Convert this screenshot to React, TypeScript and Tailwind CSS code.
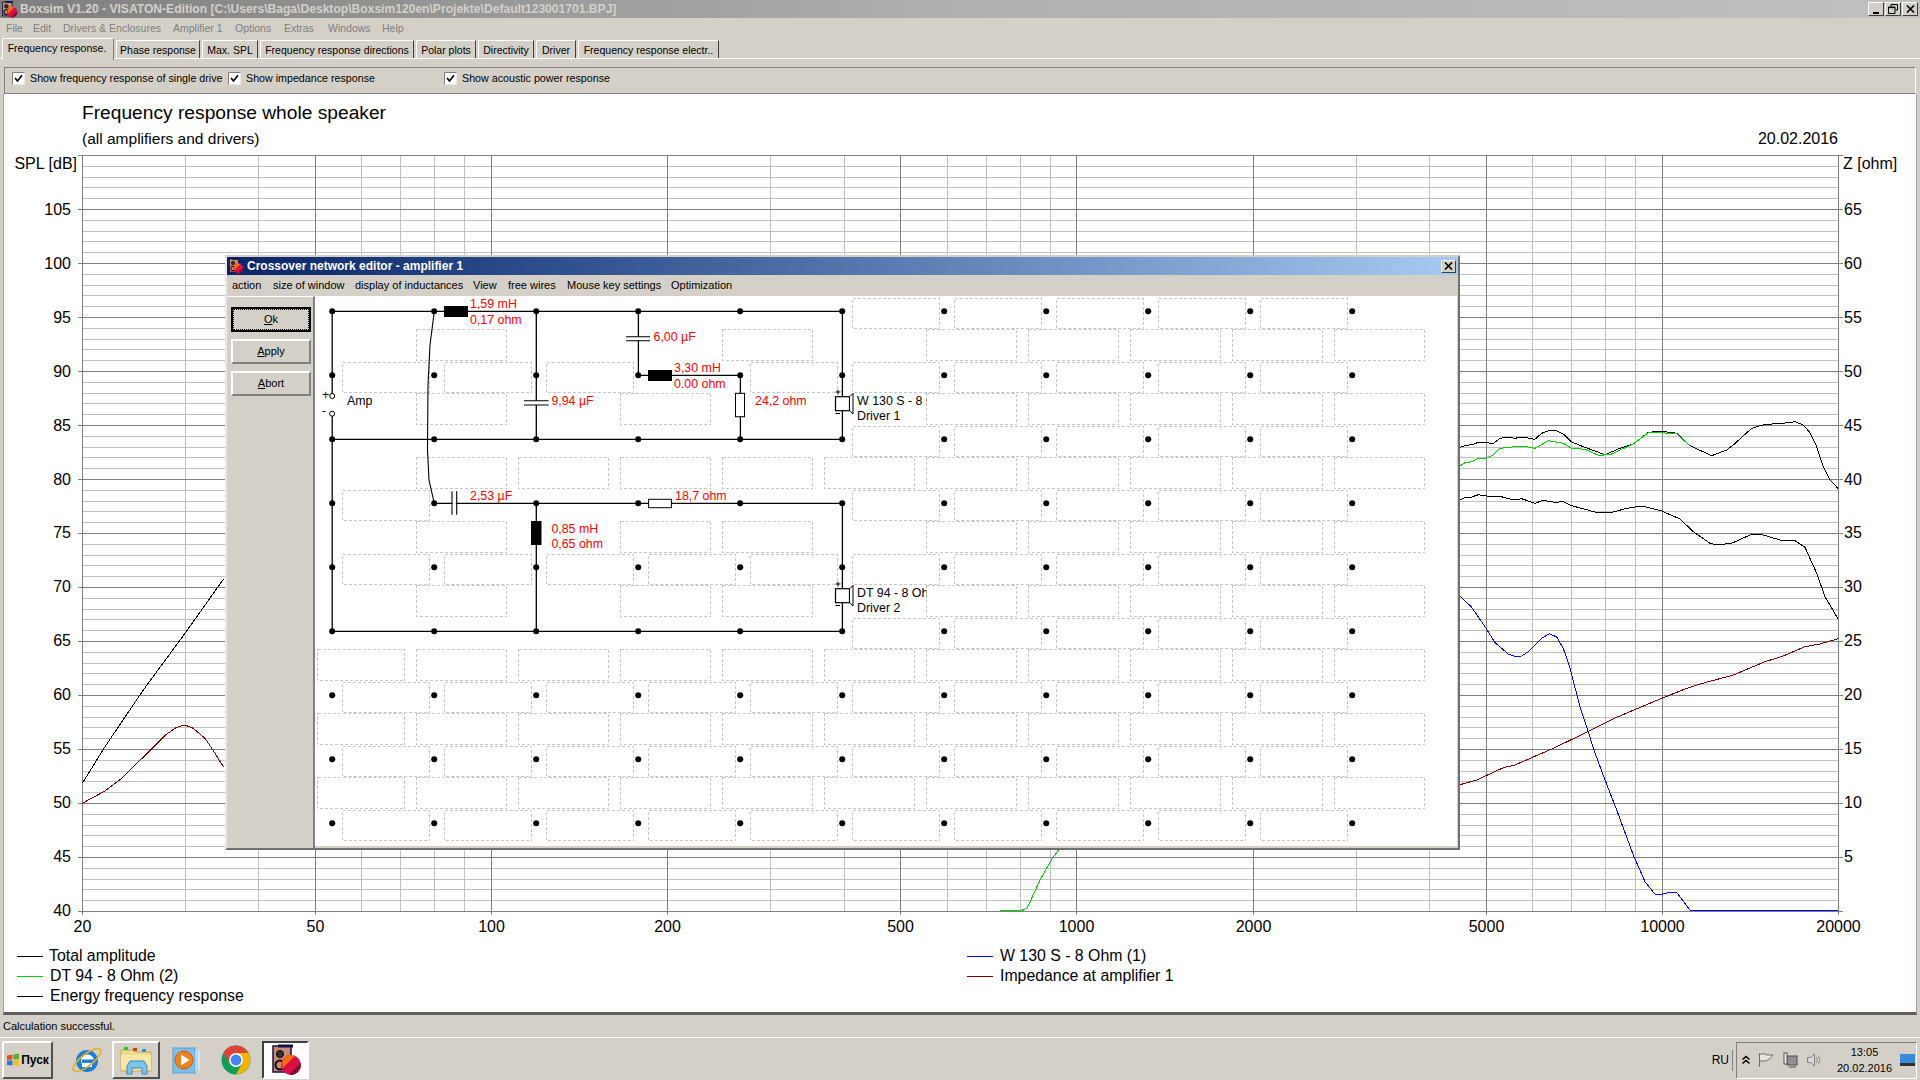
import React from "react";

type P = [number, number];
const conv = (pts: P[], ox: number, oy: number) => pts.map(([x, y]) => `${(x / 3 + ox).toFixed(1)},${(y / 3 + oy).toFixed(1)}`).join(" ");

const totalPts: P[] = [[60,622],[80,616],[100,613],[115,607],[160,610],[180,595],[205,592],[225,595],[245,591],[285,598],[305,580],[330,571],[350,573],[370,582],[395,606],[430,620],[495,644],[540,625],[580,612],[625,577],[665,574],[710,580],[750,617],[815,647],[860,630],[880,615],[935,565],[975,553],[1020,551],[1065,545],[1090,555],[1110,578],[1130,620],[1150,680],[1170,720],[1195,746]];
const greenPts: P[] = [[60,678],[75,668],[95,665],[115,655],[140,654],[160,645],[180,625],[245,618],[285,625],[325,602],[370,610],[395,625],[435,628],[475,646],[510,644],[580,612],[625,578],[665,578],[710,582],[750,617]];
const energyA: P[] = [[60,780],[75,773],[95,771],[115,764],[160,771],[180,769],[220,780],[245,776],[285,790],[310,781],[345,787],[370,785]];
const energyB: P[] = [[395,17],[465,36],[520,36],[560,25],[605,18],[665,33],[720,57],[760,95],[810,130],[830,135],[875,130],[930,105],[960,102],[1020,120],[1065,122],[1095,142],[1130,220],[1155,290],[1195,358]];
const bluePts: P[] = [[60,288],[95,322],[135,380],[165,428],[205,462],[225,469],[245,468],[265,455],[305,415],[328,401],[350,411],[370,445],[390,505],[420,620],[445,695],[460,745],[495,840],[530,930],[580,1065],[615,1145],[645,1183],[665,1183],[690,1177],[710,1177],[750,1231],[1195,1231]];
const redPts: P[] = [[60,854],[110,840],[190,803],[225,795],[340,745],[440,697],[530,652],[665,595],[735,567],[780,552],[880,525],[975,485],[1030,468],[1095,440],[1140,432],[1195,416]];
const leftBlack: P[] = [[67,670],[135,560],[250,390],[375,220],[490,58]];
const leftRed: P[] = [[67,730],[135,693],[185,655],[320,522],[350,502],[375,495],[400,505],[435,535],[465,580],[490,620]];
const greenLow: P[] = [[0,241],[65,241],[80,235],[95,205],[120,150],[150,97],[175,60]];

const fx = (f: number) => Math.round(82 + 585.33 * Math.log10(f / 20)) + 0.5;
const freqs = [20,30,40,50,60,70,80,90,100,200,300,400,500,600,700,800,900,1000,2000,3000,4000,5000,6000,7000,8000,9000,10000,20000];
const majorF = [20,50,100,200,500,1000,2000,5000,10000,20000];
const majorY = Array.from({ length: 15 }, (_, i) => 155 + i * 54);
const minorY = Array.from({ length: 71 }, (_, i) => 155 + i * 10.8).filter((_, i) => i % 5 !== 0);

function Chart() {
  return (
    <svg viewBox="4 150 1912 790" className="block w-[1912px] h-[790px]">
      <g shapeRendering="crispEdges" strokeWidth="1">
        {minorY.map((y) => <line key={y} x1={82} x2={1838} y1={Math.round(y) + 0.5} y2={Math.round(y) + 0.5} stroke="#c0c0c0" />)}
        {freqs.filter((f) => !majorF.includes(f)).map((f) => <line key={f} x1={fx(f)} x2={fx(f)} y1={155} y2={911} stroke="#c0c0c0" />)}
        {majorY.map((y) => <line key={y} x1={78} x2={1843} y1={y + 0.5} y2={y + 0.5} stroke="#808080" />)}
        {majorF.map((f) => <line key={f} x1={fx(f)} x2={fx(f)} y1={155} y2={915} stroke="#808080" />)}
      </g>
      <g fill="none" strokeWidth="1" shapeRendering="crispEdges">
        <polyline points={conv(leftBlack, 60, 560)} stroke="#000000" />
        <polyline points={conv(leftRed, 60, 560)} stroke="#800000" />
        <polyline points={conv(totalPts, 1440, 240)} stroke="#000000" />
        <polyline points={conv(greenPts, 1440, 240)} stroke="#00d000" />
        <polyline points={`${conv(energyA, 1440, 240)} ${conv(energyB, 1440, 500)}`} stroke="#000000" />
        <polyline points={conv(bluePts, 1440, 500)} stroke="#0000ff" />
        <polyline points={conv(redPts, 1440, 500)} stroke="#800000" />
        <polyline points={conv(greenLow, 1000, 830)} stroke="#00d000" />
      </g>
      <g fontSize="16" fill="#000000">
        <text x={77} y={163} textAnchor="end" dominantBaseline="central">SPL [dB]</text>
        <text x={1843} y={163} dominantBaseline="central">Z [ohm]</text>
        {[105,100,95,90,85,80,75,70,65,60,55,50,45,40].map((v, i) => (
          <text key={v} x={71} y={209.4 + i * 53.92} textAnchor="end" dominantBaseline="central">{v}</text>
        ))}
        {[65,60,55,50,45,40,35,30,25,20,15,10,5].map((v, i) => (
          <text key={v} x={1844} y={209.4 + i * 53.92} dominantBaseline="central">{v}</text>
        ))}
        {majorF.map((f) => (
          <text key={f} x={fx(f)} y={926} textAnchor="middle" dominantBaseline="central">{f}</text>
        ))}
      </g>
    </svg>
  );
}

const colX = Array.from({ length: 11 }, (_, i) => 332.2 + i * 102);
const rowY = Array.from({ length: 9 }, (_, i) => 311.3 + i * 64);
const r = (a: number, b: number) => Array.from({ length: b - a + 1 }, (_, i) => a + i);
const rowA: [number, number[]][] = [
  [311, r(5, 9)], [375, [0, 1, 2, 4, ...r(5, 9)]], [439, r(5, 9)], [503, [0, ...r(5, 9)]],
  [567, r(0, 9)], [631, r(5, 9)], [695, r(0, 9)], [759, r(0, 9)], [823, r(0, 9)],
];
const rowB: [number, number[]][] = [
  [329, [1, 4, ...r(6, 10)]], [393, [1, 3, ...r(6, 10)]], [457, r(1, 10)], [521, [1, 3, 4, ...r(6, 10)]],
  [585, [1, 3, 4, ...r(6, 10)]], [649, r(0, 10)], [713, r(0, 10)], [777, r(0, 10)],
];

const RL = ({ x, y, t, c = "#ff0000" }: { x: number; y: number; t: string; c?: string }) => (
  <text x={x} y={y} fill={c} fontSize="12.4" dominantBaseline="central">{t}</text>
);

function Driver({ dy }: { dy: number }) {
  return (
    <g transform={`translate(0 ${dy})`}>
      <rect x={835.5} y={396.7} width={14} height={14} fill="#fff" stroke="#000" strokeWidth="1.2" />
      <path d="M850 396.5 L853 393.3 V414 L850 410.8" fill="#fff" stroke="#000" strokeWidth="1" />
      <path d="M835.5 392 h5 M838 389.5 v5 M835.5 413.5 h4.5" stroke="#000" strokeWidth="1" fill="none" />
    </g>
  );
}

function Circuit() {
  const w = { stroke: "#000", strokeWidth: 1.3, fill: "none" };
  return (
    <svg viewBox="315 296 1142 550" className="block w-[1142px] h-[550px] bg-white">
      <defs>
        <clipPath id="drvclip"><rect x={852} y={380} width={74.5} height={240} /></clipPath>
      </defs>
      <g fill="none" stroke="#c8c8c8" strokeWidth="1" strokeDasharray="3 2" shapeRendering="crispEdges">
        {rowA.flatMap(([ny, ks]) => ks.map((k) => (
          <rect key={`a${ny}-${k}`} x={342.5 + k * 102} y={ny - 12.5} width={87} height={30} />
        )))}
        {rowB.flatMap(([y, ks]) => ks.map((k) => (
          <rect key={`b${y}-${k}`} x={k === 0 ? 317.5 : 314.5 + k * 102} y={y + 0.5} width={k === 0 ? 87 : 90} height={31} />
        )))}
      </g>
      <g {...w}>
        <path d="M332.2 311.3 H842.4 V396.7 M842.4 410.7 V439.3 M332.2 439.3 H842.4" />
        <path d="M332.2 311.3 V396 M332.2 414 V631.3 H842.4 V603 M842.4 588.7 V503.3 H434.3" />
        <path d="M536.3 311.3 V400.7 M536.3 405 V439.3 M638.4 311.3 V336.7 M638.4 340.7 V375.3 H740.4 V393.3 M740.4 416.7 V439.3 M536.3 503.3 V631.3" />
        <path d="M434.3 311.3 L430 345 L428 385 L427.5 450 L429 480 L434.3 503.3" strokeWidth="1.1" />
        <path d="M524 400.7 H548.6 M524 405 H548.6 M626 336.7 H650 M626 340.7 H650 M452 491.3 V514.7 M456.7 491.3 V514.7" strokeWidth="1.1" />
      </g>
      <rect x={444} y={306} width={24} height={11} fill="#000" />
      <rect x={648} y={370} width={24} height={11} fill="#000" />
      <rect x={531} y={521} width={10.5} height={24} fill="#000" />
      <rect x={735.5} y={393.3} width={9} height={23.4} fill="#fff" stroke="#000" strokeWidth="1" />
      <rect x={648.6} y={499.3} width={22.8} height={8.4} fill="#fff" stroke="#000" strokeWidth="1" />
      <rect x={452.8} y={499} width={3} height={9} fill="#fff" />
      <Driver dy={0} />
      <Driver dy={192} />
      {colX.flatMap((x) => rowY.map((y) => <circle key={`${x}-${y}`} cx={x} cy={y} r={3} fill="#000" />))}
      <circle cx={332.2} cy={396} r={2.5} fill="#fff" stroke="#000" />
      <circle cx={332.2} cy={413.7} r={2.5} fill="#fff" stroke="#000" />
      <RL x={322} y={394.5} t="+" c="#000" />
      <RL x={322} y={411} t="-" c="#000" />
      <RL x={347} y={401} t="Amp" c="#000" />
      <RL x={470} y={304} t="1,59 mH" />
      <RL x={470} y={320} t="0,17 ohm" />
      <RL x={653.5} y={336.7} t="6,00 µF" />
      <RL x={674} y={367.7} t="3,30 mH" />
      <RL x={674} y={383.7} t="0.00 ohm" />
      <RL x={551.4} y={401} t="9,94 µF" />
      <RL x={755} y={401} t="24,2 ohm" />
      <RL x={470} y={496} t="2,53 µF" />
      <RL x={675} y={496} t="18,7 ohm" />
      <RL x={551.4} y={529} t="0,85 mH" />
      <RL x={551.4} y={544} t="0,65 ohm" />
      <g clipPath="url(#drvclip)">
        <RL x={857} y={400.7} t="W 130 S - 8 Ohm" c="#000" />
        <RL x={857} y={415.7} t="Driver 1" c="#000" />
        <RL x={857} y={592.7} t="DT 94 - 8 Ohm" c="#000" />
        <RL x={857} y={607.7} t="Driver 2" c="#000" />
      </g>
    </svg>
  );
}

const BoxIcon = ({ s }: { s: number }) => (
  <svg width={s} height={s} viewBox="0 0 32 32">
    <rect x="3" y="2" width="18" height="26" fill="#c98a70" stroke="#101040" strokeWidth="1.5" />
    <rect x="8" y="0.5" width="15" height="3" fill="#101050" />
    <circle cx="10" cy="10" r="3.5" fill="#333" stroke="#000" />
    <circle cx="10" cy="21" r="4.5" fill="#c98a70" stroke="#000" strokeWidth="2" />
    <circle cx="21" cy="21" r="10" fill="#d81048" />
    <path d="M13.5 15 A10 10 0 0 1 25 11.8 L13 24 A10 10 0 0 1 13.5 15Z" fill="#ff6a10" />
    <path d="M19 30.8 L30.5 19 A10 10 0 0 1 19 30.8Z" fill="#801030" />
  </svg>
);

const Check = ({ x }: { x: number }) => (
  <span className="flex items-center justify-center w-[13px] h-[13px] bg-white border border-t-[#808080] border-l-[#808080] border-r-[#e8e8e8] border-b-[#e8e8e8] shrink-0" style={{ marginLeft: x }}>
    <svg width="9" height="9" viewBox="0 0 9 9"><path d="M1 4 L3.5 7 L8 1.2" fill="none" stroke="#000" strokeWidth="1.7" /></svg>
  </span>
);

const WinBtn = ({ children }: { children: React.ReactNode }) => (
  <span className="flex items-center justify-center w-[16px] h-[14px] bg-[#d4d0c8] border border-t-white border-l-white border-r-[#404040] border-b-[#404040]">{children}</span>
);

const tabs: [string, number][] = [["Phase response", 84], ["Max. SPL", 56], ["Frequency response directions", 154], ["Polar plots", 60], ["Directivity", 56], ["Driver", 40], ["Frequency response electr..", 141]];
const mainMenu: [string, number][] = [["File", 27], ["Edit", 30], ["Drivers & Enclosures", 110], ["Amplifier 1", 62], ["Options", 49], ["Extras", 44], ["Windows", 54], ["Help", 30]];
const subMenu: [string, number][] = [["action", 41], ["size of window", 82], ["display of inductances", 118], ["View", 35], ["free wires", 59], ["Mouse key settings", 104], ["Optimization", 70]];

function SideBtn({ l, rest, focus }: { l: string; rest: string; focus?: boolean }) {
  return (
    <button className={`h-[25px] w-[80px] ml-[4px] bg-[#d4d0c8] text-[11px] text-black flex items-center justify-center ${focus ? "border-2 border-black" : "border-2 border-t-white border-l-white border-r-[#808080] border-b-[#808080]"}`}>
      <span className={focus ? "border border-dotted border-black w-full h-full flex items-center justify-center" : ""}>
        <span className="underline">{l}</span>{rest}
      </span>
    </button>
  );
}

function CrossoverWindow() {
  return (
    <div className="absolute left-[225px] top-[255px] w-[1235px] h-[595px] flex flex-col bg-[#d4d0c8] border-2 border-t-[#d4d0c8] border-l-[#e8e8e8] border-r-[#707070] border-b-[#707070]">
      <div className="h-[18px] flex items-center bg-gradient-to-r from-[#0a246a] to-[#a6caf0] shrink-0">
        <span className="ml-[1px] mr-[3px] flex"><BoxIcon s={16} /></span>
        <span className="text-[12px] font-bold text-white whitespace-nowrap">Crossover network editor - amplifier 1</span>
        <span className="ml-auto mr-[2px] flex items-center justify-center w-[15px] h-[13px] bg-[#d4d0c8] border border-t-white border-l-white border-r-[#404040] border-b-[#404040]">
          <svg width="9" height="8" viewBox="0 0 9 8"><path d="M1 0.5 L8 7.5 M8 0.5 L1 7.5" stroke="#000" strokeWidth="1.6" /></svg>
        </span>
      </div>
      <div className="h-[21px] flex items-center shrink-0 pl-[5px] text-[11px] text-black">
        {subMenu.map(([t, w]) => (
          <span key={t} className="whitespace-nowrap shrink-0" style={{ width: w }}>{t}</span>
        ))}
      </div>
      <div className="flex flex-1 min-h-0">
        <div className="w-[88px] shrink-0 flex flex-col gap-[7px] pt-[10px] border-t border-t-white border-r-2 border-r-[#808080]">
          <SideBtn l="O" rest="k" focus />
          <SideBtn l="A" rest="pply" />
          <SideBtn l="A" rest="bort" />
        </div>
        <Circuit />
      </div>
    </div>
  );
}

const Legend = ({ c, t, gap = 6 }: { c: string; t: string; gap?: number }) => (
  <div className="h-[20px] flex items-center">
    <span className="h-px w-[26px] shrink-0" style={{ backgroundColor: c }} />
    <span className="text-[15.85px] text-black whitespace-nowrap" style={{ marginLeft: gap }}>{t}</span>
  </div>
);

const IEIcon = () => (
  <svg width="34" height="34" viewBox="0 0 34 34">
    <circle cx="17" cy="18" r="11" fill="#1f7fd6" />
    <circle cx="17.5" cy="18" r="6.5" fill="#fff" />
    <rect x="12" y="16.5" width="16" height="3.4" fill="#1f7fd6" />
    <path d="M19 20 h8 l-2 6 h-8 z" fill="#1f7fd6" />
    <rect x="12" y="20" width="10" height="4" fill="#fff" />
    <ellipse cx="17" cy="17" rx="17" ry="6" transform="rotate(-38 17 17)" fill="none" stroke="#e8b020" strokeWidth="1.6" />
  </svg>
);
const FolderIcon = () => (
  <svg width="32" height="30" viewBox="0 0 32 30">
    <path d="M1 5 h12 l2 2 h16 v19 h-30z" fill="#f0dc90" stroke="#c8a850" />
    <rect x="4" y="2" width="4" height="3" fill="#30c030" />
    <rect x="13" y="3" width="4" height="3" fill="#d04020" />
    <rect x="22" y="4" width="4" height="3" fill="#3090e0" />
    <path d="M1 10 h30 v15 h-30z" fill="#f6e6a8" />
    <path d="M10 16 h14 l3 5 v8 h-5 v-6 h-10 v6 h-5 v-8z" fill="#7cc4ee" stroke="#3a86c0" />
  </svg>
);
const MediaIcon = () => (
  <svg width="32" height="30" viewBox="0 0 32 30">
    <rect x="2" y="3" width="22" height="25" fill="#7cc0ea" stroke="#5aa0d0" />
    <rect x="24" y="5" width="2" height="21" fill="#b0d8f0" />
    <rect x="27" y="6" width="2" height="19" fill="#cfe6f6" />
    <circle cx="13" cy="15" r="9" fill="#f08020" stroke="#d06010" />
    <path d="M10 9.5 L18.5 15 L10 20.5Z" fill="#fff" />
  </svg>
);
const ChromeIcon = () => (
  <svg width="30" height="30" viewBox="0 0 30 30">
    <circle cx="15" cy="15" r="14.5" fill="#0f9d58" />
    <path d="M15 .5 A14.5 14.5 0 0 0 2.4 7.8 L8.6 18.5 L15 8.5 H27.6 A14.5 14.5 0 0 0 15 .5Z" fill="#db4437" />
    <path d="M27.6 8 A14.5 14.5 0 0 1 15 29.5 L21.2 18.5 L15 8 Z" fill="#f4b400" />
    <circle cx="15" cy="15" r="7" fill="#fff" />
    <circle cx="15" cy="15" r="5.4" fill="#4285f4" />
  </svg>
);

function Taskbar() {
  return (
    <div className="h-[43px] shrink-0 flex items-center border-t border-t-white bg-[#d4d0c8] pt-[2px]">
      <button className="ml-[2px] w-[51px] h-[38px] flex items-center justify-center gap-[1px] border-2 border-t-white border-l-white border-r-[#505050] border-b-[#505050] bg-[#d4d0c8]">
        <svg width="14" height="14" viewBox="0 0 14 14">
          <path d="M1 2.5 L6.4 1.5 V6.5 L1 7Z" fill="#e8501c" />
          <path d="M7.3 1.4 L13 .6 V6.2 L7.3 6.5Z" fill="#5cb030" />
          <path d="M1 7.8 L6.4 7.3 V12.4 L1 12Z" fill="#2a78d8" />
          <path d="M7.3 7.3 L13 7 V12.8 L7.3 12.5Z" fill="#f4c020" />
        </svg>
        <span className="text-[12px] font-bold text-black">Пуск</span>
      </button>
      <span className="ml-[16px] w-[36px] flex justify-center"><IEIcon /></span>
      <span className="ml-[7px] w-[48px] h-[38px] flex items-center justify-center border-2 border-t-white border-l-white border-r-[#505050] border-b-[#505050]"><FolderIcon /></span>
      <span className="ml-[11px] w-[32px] flex justify-center"><MediaIcon /></span>
      <span className="ml-[18px] w-[30px] flex justify-center"><ChromeIcon /></span>
      <span className="ml-[11px] w-[47px] h-[38px] flex items-center justify-center bg-white border-2 border-t-[#404040] border-l-[#404040] border-r-white border-b-white"><BoxIcon s={32} /></span>
      <span className="ml-auto text-[12px] text-black mr-[3px]">RU</span>
      <span className="w-px h-[21px] bg-[#808080] mr-[3px]" />
      <div className="w-[181px] h-[37px] mr-[3px] flex items-center border border-t-[#808080] border-l-[#808080] border-r-white border-b-white">
        <svg width="10" height="10" viewBox="0 0 10 10" className="ml-[4px] shrink-0"><path d="M1.5 4.5 L5 1.5 L8.5 4.5 M1.5 8.5 L5 5.5 L8.5 8.5" fill="none" stroke="#000" strokeWidth="1.5" /></svg>
        <svg width="16" height="16" viewBox="0 0 16 16" className="ml-[7px] shrink-0"><path d="M1.5 1 V15 M2 2 H8 V3 H15 L12 6.5 L8 9 H2" fill="#e8e6e0" stroke="#707070" /></svg>
        <svg width="16" height="16" viewBox="0 0 16 16" className="ml-[8px] shrink-0"><rect x="5" y="4" width="10" height="9" fill="#909090" stroke="#505050" /><rect x="2" y="1" width="3" height="11" fill="#f0f0f0" stroke="#505050" /><path d="M7 15 H14" stroke="#505050" /></svg>
        <svg width="16" height="16" viewBox="0 0 16 16" className="ml-[8px] shrink-0"><path d="M1.5 5.5 H4.5 L8.5 2 V14 L4.5 10.5 H1.5Z" fill="#d8d8d8" stroke="#808080" /><path d="M10.5 5 Q12 8 10.5 11 M12.5 3.5 Q15 8 12.5 12.5" fill="none" stroke="#909090" /></svg>
        <div className="ml-[15px] w-[55px] flex flex-col items-center text-[11px] leading-[16px] text-black">
          <span>13:05</span>
          <span>20.02.2016</span>
        </div>
        <span className="ml-[8px] w-[15px] h-[12px] bg-[#3a8ad8] border-b-[3px] border-b-[#303030] shrink-0" />
      </div>
    </div>
  );
}

export default function App() {
  return (
    <div className="w-[1920px] h-[1080px] relative overflow-hidden flex flex-col bg-[#d4d0c8] font-['Liberation_Sans',Arial,sans-serif]">
      <div className="h-[18px] shrink-0 flex items-center bg-gradient-to-r from-[#7f7f7f] via-[#b0b0b0] to-[#c0c0c0]">
        <span className="flex mr-[2px] ml-[1px]"><BoxIcon s={17} /></span>
        <span className="text-[12.1px] font-bold text-[#d4d0c8] whitespace-nowrap">Boxsim V1.20 - VISATON-Edition [C:\Users\Baga\Desktop\Boxsim120en\Projekte\Default123001701.BPJ]</span>
        <span className="ml-auto mr-[2px] flex gap-px">
          <WinBtn><svg width="9" height="9" viewBox="0 0 9 9"><rect x="1" y="7" width="6" height="2" fill="#000" /></svg></WinBtn>
          <WinBtn><svg width="10" height="10" viewBox="0 0 10 10"><path d="M3 2.5 V.5 H9.5 V6 H7.5 M.5 3 H7 V9.5 H.5Z M.5 3.6 H7" fill="none" stroke="#000" /></svg></WinBtn>
          <WinBtn><svg width="9" height="8" viewBox="0 0 9 8"><path d="M1 .5 L8 7.5 M8 .5 L1 7.5" stroke="#000" strokeWidth="1.6" /></svg></WinBtn>
        </span>
      </div>
      <div className="h-[20px] shrink-0 flex items-center pl-[6px] pt-[2px] text-[10.5px] text-[#808080]">
        {mainMenu.map(([t, w]) => (
          <span key={t} className="whitespace-nowrap shrink-0" style={{ width: w }}>{t}</span>
        ))}
      </div>
      <div className="h-[21px] shrink-0 flex items-end pl-[2px] border-b border-b-white text-[10.5px] text-black">
        <span className="w-[112px] h-[22px] -mb-[2px] z-10 bg-[#d4d0c8] flex items-start justify-center pt-[2px] pr-[2px] border-l border-t border-l-white border-t-white border-r border-r-[#808080]">Frequency response.</span>
        {tabs.map(([t, w]) => (
          <span key={t} className="ml-[2px] h-[18px] pt-[2px] flex items-center justify-center border-l border-t border-l-white border-t-white border-r border-r-[#404040] shrink-0 whitespace-nowrap" style={{ width: w }}>{t}</span>
        ))}
      </div>
      <div className="h-[8px] shrink-0" />
      <div className="h-[27px] shrink-0 mx-[4px] pb-[5px] flex items-center border border-t-[#808080] border-l-[#808080] border-r-white border-b-[#808080] text-[10.7px] text-black">
        <Check x={7} />
        <span className="ml-[5px] w-[198px] whitespace-nowrap shrink-0">Show frequency response of single drive</span>
        <Check x={0} />
        <span className="ml-[5px] w-[198px] whitespace-nowrap shrink-0">Show impedance response</span>
        <Check x={0} />
        <span className="ml-[5px] whitespace-nowrap">Show acoustic power response</span>
      </div>
      <div className="flex-1 min-h-0 ml-[3px] mr-[3px] border-l border-r border-l-[#a0a0a0] border-r-[#a0a0a0] border-b-[3px] border-b-[#606060] bg-white flex flex-col">
        <div className="h-[56px] pt-[7px] px-[78px] text-black shrink-0">
          <div className="h-[24px] text-[19.2px] leading-[24px]">Frequency response whole speaker</div>
          <div className="h-[24px] pt-[2px] text-[15.5px] leading-[24px] flex justify-between"><span>(all amplifiers and drivers)</span><span className="text-[16px]">20.02.2016</span></div>
        </div>
        <Chart />
        <div className="flex pt-[6px]">
          <div className="ml-[13px] w-[950px]">
            <Legend c="#000000" t="Total amplitude" />
            <Legend c="#00d000" t="DT 94 - 8 Ohm (2)" gap={7} />
            <Legend c="#000000" t="Energy frequency response" gap={7} />
          </div>
          <div>
            <Legend c="#0000ff" t="W 130 S - 8 Ohm (1)" gap={7} />
            <Legend c="#800000" t="Impedance at amplifier 1" gap={7} />
          </div>
        </div>
      </div>
      <div className="h-[22px] shrink-0 flex items-center pl-[3px] text-[11px] text-black">Calculation successful.</div>
      <Taskbar />
      <CrossoverWindow />
    </div>
  );
}
